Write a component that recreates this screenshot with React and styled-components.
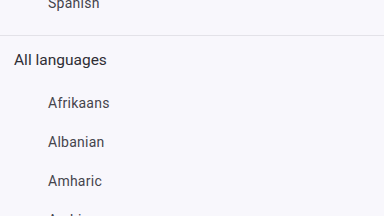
import { createGlobalStyle, styled } from 'styled-components'

const GlobalStyle = createGlobalStyle`
  html, body {
    margin: 0;
    padding: 0;
    background: #f8f7fc;
  }
  body {
    font-family: Roboto, "Noto Sans", sans-serif;
  }
`

const Page = styled.div`
  width: 384px;
  height: 216px;
  overflow: hidden;
  background: #f8f7fc;
`

const List = styled.div`
  display: flex;
  flex-direction: column;
  margin-top: ${(p) => p.$offset || 0}px;
`

const Item = styled.div`
  height: 39px;
  display: flex;
  align-items: center;
  padding-left: 48px;
  font-size: 14px;
  color: #45444c;
  letter-spacing: 0.25px;
`

const Divider = styled.hr`
  margin: 13px 0 0;
  border: 0;
  height: 1px;
  background: #e3e2e8;
`

const SectionTitle = styled.div`
  height: 48px;
  display: flex;
  align-items: center;
  padding-left: 14px;
  font-size: 15.5px;
  color: #2f2e35;
`

const languages = ['Afrikaans', 'Albanian', 'Amharic', 'Arabic']

const App = () => {
  return (
    <Page>
      <GlobalStyle />
      <List $offset={-17}>
        <Item>Spanish</Item>
      </List>
      <Divider />
      <SectionTitle>All languages</SectionTitle>
      <List $offset={-1}>
        {languages.map((lang) => (
          <Item key={lang}>{lang}</Item>
        ))}
      </List>
    </Page>
  )
}

export default App
